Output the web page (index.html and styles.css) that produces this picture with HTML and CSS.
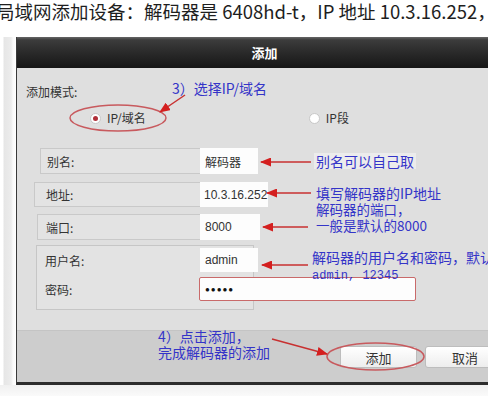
FILE: index.html
```html
<!DOCTYPE html>
<html lang="zh-CN">
<head>
    <meta charset="UTF-8">
    <title>添加设备</title>
    <link rel="stylesheet" href="styles.css">
</head>
<body>
<div class="page">
    <p class="intro">局域网添加设备：解码器是 6408hd-t，IP 地址 10.3.16.252，</p>

    <div class="stage">
        <div class="backdrop"></div>
        <div class="dialog">
            <div class="titlebar">添加</div>

            <div class="content">
                <div class="mode">
                    <div class="mode-label">添加模式:</div>
                    <div class="mode-options">
                        <span class="option first"><span class="radio checked"></span>IP/域名</span>
                        <span class="option second"><span class="radio"></span>IP段</span>
                    </div>
                </div>

                <div class="fields">
                    <div class="field row-alias">
                        <span class="field-name">别名:</span>
                        <span class="field-value">解码器</span>
                    </div>
                    <div class="field row-address">
                        <span class="field-name">地址:</span>
                        <span class="field-value">10.3.16.252</span>
                    </div>
                    <div class="field row-port">
                        <span class="field-name">端口:</span>
                        <span class="field-value">8000</span>
                    </div>
                    <div class="group">
                        <div class="field row-user">
                            <span class="field-name">用户名:</span>
                            <span class="field-value">admin</span>
                        </div>
                        <div class="field row-pass">
                            <span class="field-name">密码:</span>
                            <span class="field-value password">●●●●●</span>
                        </div>
                    </div>
                </div>
            </div>

            <div class="actions">
                <button class="btn btn-add">添加</button>
                <button class="btn btn-cancel">取消</button>
            </div>
        </div>
    </div>
    <div class="under"></div>

    <!-- annotation layer drawn over the screenshot -->
    <svg class="marks" width="488" height="396" viewBox="0 0 488 396">
        <defs>
            <marker id="head" markerWidth="11" markerHeight="9" refX="10" refY="4.5" orient="auto" markerUnits="userSpaceOnUse">
                <path d="M0,0 L11,4.5 L0,9 z" fill="#d41f1f"/>
            </marker>
        </defs>
        <ellipse cx="118" cy="118" rx="48" ry="13" class="ring"/>
        <ellipse cx="375.5" cy="356.5" rx="48.5" ry="13.5" class="ring"/>
        <line x1="185" y1="95" x2="160" y2="112" class="arrow"/>
        <line x1="311" y1="162" x2="261" y2="162" class="arrow"/>
        <line x1="311" y1="193" x2="267" y2="193" class="arrow"/>
        <line x1="308" y1="227" x2="263" y2="227" class="arrow"/>
        <line x1="308" y1="265" x2="262" y2="265" class="arrow"/>
        <line x1="272" y1="339" x2="327" y2="354" class="arrow"/>
    </svg>

    <div class="note note-mode">3）选择IP/域名</div>
    <div class="note note-alias">别名可以自己取</div>
    <div class="note note-address">填写解码器的IP地址</div>
    <div class="note note-port">解码器的端口，<br>一般是默认的8000</div>
    <div class="note note-user">解码器的用户名和密码，默认<br><span class="mono">admin, 12345</span></div>
    <div class="note note-add">4）点击添加，<br>完成解码器的添加</div>
</div>
</body>
</html>
```

FILE: styles.css
```css
body {
    margin: 0;
    padding: 0;
    background: #fff;
    font-family: 'Noto Sans CJK SC', sans-serif;
    color: #222;
}

.page {
    position: relative;
    width: 488px;
    height: 396px;
    overflow: hidden;
}

.intro {
    margin: 0 0 0 -4px;
    height: 37px;
    font-size: 18.5px;
    line-height: 22px;
    white-space: nowrap;
    color: #1e1e1e;
}

.stage {
    display: flex;
    height: 348px;
}

.backdrop {
    width: 16px;
    flex-shrink: 0;
    background: linear-gradient(to right, #fff 0, #fff 3px, #e6e6e6 4px, #ececec 11px, #fafafa 13px, #fff 16px);
}

.dialog {
    width: 496px;
    flex-shrink: 0;
    display: flex;
    flex-direction: column;
    border-left: 1px solid #3a3a3a;
    border-bottom: 3px solid #2c2c2c;
    box-sizing: border-box;
    background: #dedede;
}

.titlebar {
    height: 31px;
    line-height: 31px;
    text-align: center;
    color: #fff;
    font-size: 13px;
    font-weight: bold;
    background: linear-gradient(to bottom, #666 0, #3c3c3c 3px, #2a2a2a 50%, #161616 100%);
}

.content {
    height: 262px;
    background: #dfdfdf;
    font-size: 12px;
    color: #333;
}

.mode {
    height: 75px;
    padding-top: 17px;
    box-sizing: border-box;
}

.mode-label {
    margin-left: 9px;
    line-height: 14px;
}

.mode-options {
    display: flex;
    margin-top: 12px;
    line-height: 14px;
}

.option {
    display: flex;
    align-items: center;
    gap: 6px;
}

.option.first {
    margin-left: 73px;
}

.option.second {
    margin-left: 163px;
}

.radio {
    width: 9px;
    height: 9px;
    border-radius: 50%;
    background: #fff;
    border: 1px solid #c8c8c8;
    box-sizing: content-box;
    position: relative;
}

.radio.checked::after {
    content: "";
    position: absolute;
    left: 2px;
    top: 2px;
    width: 5px;
    height: 5px;
    border-radius: 50%;
    background: #b0303a;
}

.fields {
    display: flex;
    flex-direction: column;
}

.field {
    display: flex;
    align-items: stretch;
}

.field-name {
    flex-shrink: 0;
    display: flex;
    align-items: center;
    padding-left: 6px;
    box-sizing: border-box;
    background: #e3e3e3;
    border: 1px solid #c9c9c9;
    border-right: none;
}

.field-value {
    flex-shrink: 0;
    display: flex;
    align-items: center;
    padding-left: 5px;
    box-sizing: border-box;
    background: #fdfdfd;
    font-family: 'Liberation Sans', 'Noto Sans CJK SC', sans-serif;
    font-size: 12px;
    color: #333;
}

.row-alias {
    height: 26px;
    margin: 5px 0 0 23px;
}
.row-alias .field-name { width: 160px; }
.row-alias .field-value { width: 58px; }

.row-address {
    height: 25px;
    margin: 8px 0 0 17px;
}
.row-address .field-name { width: 166px; padding-left: 11px; }
.row-address .field-value { width: 68px; padding-left: 4px; }

.row-port {
    height: 26px;
    margin: 7px 0 0 20px;
}
.row-port .field-name { width: 163px; padding-left: 8px; }
.row-port .field-value { width: 60px; }

.group {
    margin: 5px 0 0 19px;
    width: 218px;
    height: 65px;
    box-sizing: border-box;
    border: 1px solid #c6c6c6;
    background: #e3e3e3;
    padding-top: 2px;
}

.group .field-name {
    border: none;
    width: 163px;
    padding-left: 8px;
    background: transparent;
}

.row-user {
    height: 24px;
}
.row-user .field-value { width: 58px; }

.row-pass {
    height: 24px;
    margin-top: 5px;
}

.field-value.password {
    width: 217px;
    margin-left: -1px;
    border: 1.5px solid #c96a6a;
    border-radius: 2px;
    font-size: 8px;
    letter-spacing: 1px;
    color: #111;
}

.actions {
    flex: 1;
    display: flex;
    align-items: flex-start;
    gap: 8px;
    padding: 15px 0 0 323px;
    background: #cdcdcd;
    border-top: 1px solid #c4c4c4;
}

.btn {
    flex-shrink: 0;
    height: 22px;
    padding: 0;
    border: 1px solid #bdbdbd;
    border-radius: 3px;
    background: linear-gradient(to bottom, #ffffff, #ededed);
    font-family: 'Noto Sans CJK SC', sans-serif;
    font-size: 13px;
    color: #333;
}

.btn-add { width: 77px; }
.btn-cancel { width: 80px; }

.under {
    height: 11px;
    background: linear-gradient(to bottom, #f0f0f0, #fafafa);
}

.marks {
    position: absolute;
    left: 0;
    top: 0;
    pointer-events: none;
}

.ring {
    fill: none;
    stroke: #c85a5e;
    stroke-width: 1.5;
}

.arrow {
    stroke: #c83030;
    stroke-width: 1.5;
    marker-end: url(#head);
}

.note {
    position: absolute;
    font-size: 14px;
    line-height: 16px;
    color: #3434c8;
    white-space: nowrap;
}

.note-mode { left: 172px; top: 80px; }
.note-alias { left: 314px; top: 153px; background: #ececec; padding: 0 2px; }
.note-address { left: 316px; top: 185px; }
.note-port { left: 316px; top: 201px; line-height: 16px; font-size: 13.5px; }
.note-user { left: 312px; top: 249px; }
.note-add { left: 158px; top: 328px; line-height: 16px; }

.mono {
    font-family: 'Liberation Mono', monospace;
    font-size: 12px;
}
```
